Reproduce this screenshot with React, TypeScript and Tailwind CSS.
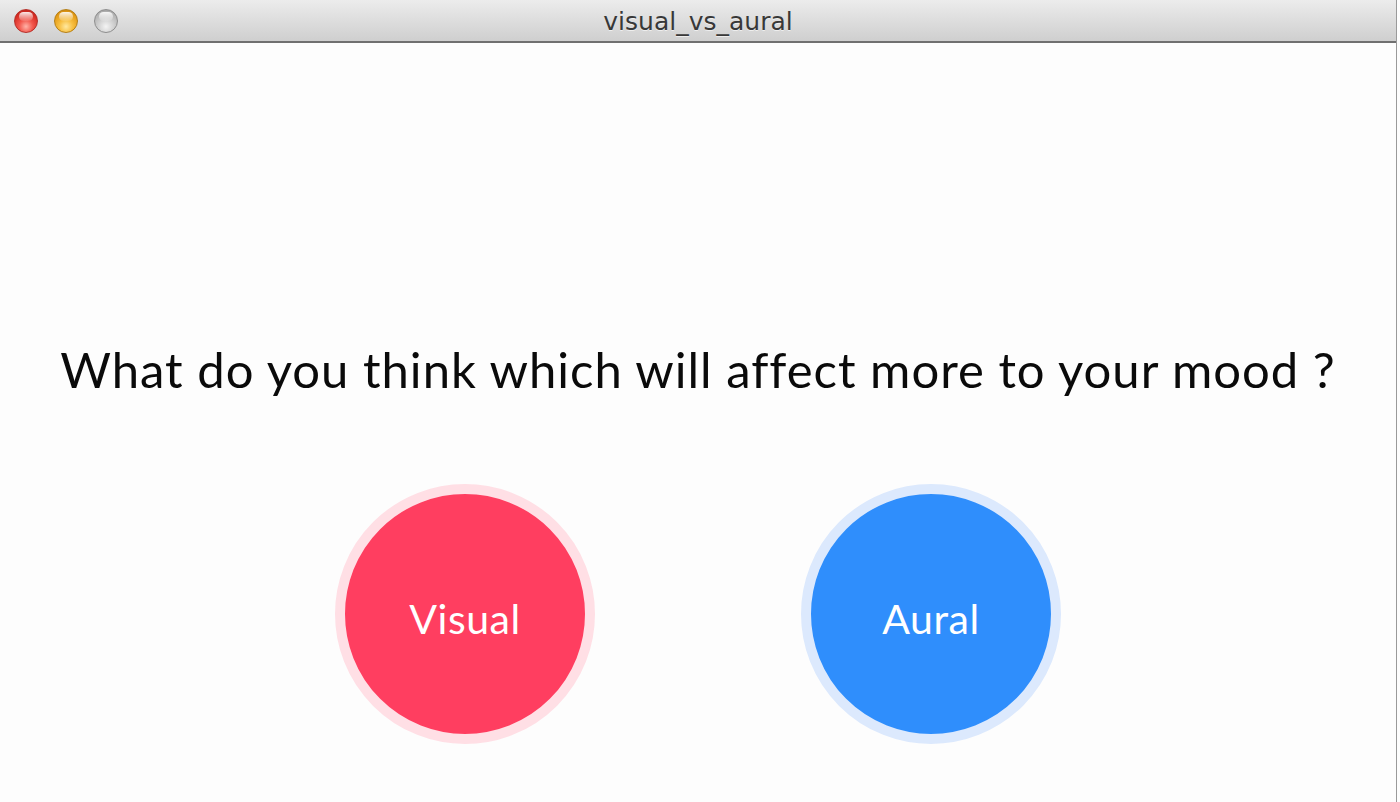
import React from "react";

const lights = [
  {
    key: "close",
    className:
      "border-[#b6302a] bg-[radial-gradient(circle_at_50%_75%,#ffb3a8_0%,#f2564b_35%,#d42b22_70%,#a9231c_100%)]",
  },
  {
    key: "min",
    className:
      "border-[#b57f16] bg-[radial-gradient(circle_at_50%_75%,#ffe9a0_0%,#f7be3f_35%,#e39a16_70%,#b6780f_100%)]",
  },
  {
    key: "max",
    className:
      "border-[#8e8e8e] bg-[radial-gradient(circle_at_50%_75%,#f4f4f4_0%,#d4d4d4_35%,#b5b5b5_70%,#8f8f8f_100%)]",
  },
];

function TrafficLight({ className }: { className: string }) {
  return (
    <div className={`relative h-[24px] w-[24px] rounded-full border ${className}`}>
      {/* gloss highlight */}
      <div className="absolute left-1/2 top-[2px] h-[9px] w-[14px] -translate-x-1/2 rounded-full bg-gradient-to-b from-white/90 to-white/10" />
    </div>
  );
}

function ChoiceButton({
  label,
  halo,
  fill,
}: {
  label: string;
  halo: string;
  fill: string;
}) {
  return (
    <button
      className={`flex h-[260px] w-[260px] items-center justify-center rounded-full border-[10px] ${halo} ${fill}`}
    >
      <span className="pt-[10px] font-['Lato','Liberation_Sans',sans-serif] text-[41px] tracking-[0.5px] text-white">
        {label}
      </span>
    </button>
  );
}

export default function App() {
  return (
    <div className="flex h-[802px] w-[1400px] bg-[#fdfdfd]">
      <div className="flex h-full w-[1397px] flex-col border-r border-[#9a9a9a] bg-[#fdfdfd]">
        {/* Title bar */}
        <div className="relative flex h-[43px] shrink-0 items-center border-b-2 border-[#707070] bg-gradient-to-b from-[#ececec] to-[#cfcfcf]">
          <div className="flex items-center gap-[16px] pl-[14px]">
            {lights.map((l) => (
              <TrafficLight key={l.key} className={l.className} />
            ))}
          </div>
          <div className="absolute inset-x-0 top-0 flex h-full items-center justify-center pt-[2px]">
            <span className="font-['DejaVu_Sans','Liberation_Sans',sans-serif] text-[25px] text-[#383838] [text-shadow:0_1px_0_rgba(255,255,255,0.6)]">
              visual_vs_aural
            </span>
          </div>
        </div>

        {/* Content */}
        <div className="flex flex-1 flex-col items-center pt-[298px]">
          <h1 className="font-['Lato','Liberation_Sans',sans-serif] text-[49px] leading-[56px] tracking-[1px] text-[#0a0a0a]">
            What do you think which will affect more to your mood ?
          </h1>
          <div className="mt-[87px] flex items-center justify-center gap-[206px]">
            <ChoiceButton label="Visual" halo="border-[#ffdfe5]" fill="bg-[#ff3e60]" />
            <ChoiceButton label="Aural" halo="border-[#dce9fd]" fill="bg-[#2f8efc]" />
          </div>
        </div>
      </div>
    </div>
  );
}
